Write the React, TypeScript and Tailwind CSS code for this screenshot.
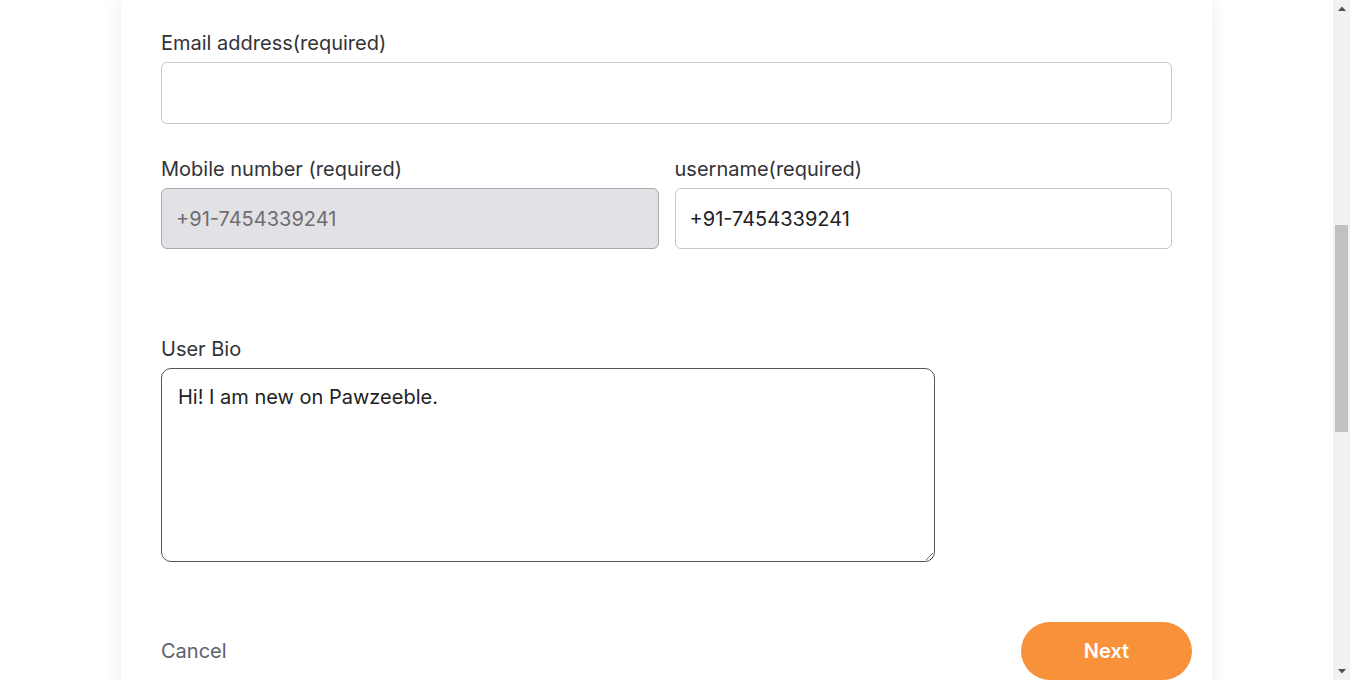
import React from "react";

function Label({ children }: { children: React.ReactNode }) {
  return (
    <label className="mb-[4px] text-[20px] leading-[30px] text-[#333338]">
      {children}
    </label>
  );
}

function ScrollBar() {
  return (
    <div className="flex h-[680px] w-[17px] shrink-0 flex-col bg-[#f1f1f1]">
      <div className="flex h-[17px] items-center justify-center">
        <svg width="8" height="5" viewBox="0 0 8 5">
          <path d="M0 5 L4 0.5 L8 5 Z" fill="#505050" />
        </svg>
      </div>
      <div className="flex flex-1 flex-col px-[2px]">
        <div className="h-[208px]" />
        <div className="h-[207px] w-full bg-[#c1c1c1]" />
      </div>
      <div className="flex h-[17px] items-center justify-center">
        <svg width="8" height="5" viewBox="0 0 8 5">
          <path d="M0 0 L4 4.5 L8 0 Z" fill="#505050" />
        </svg>
      </div>
    </div>
  );
}

export default function App() {
  return (
    <div
      className="flex h-[680px] w-full overflow-hidden bg-white"
      style={{ fontFamily: "Inter, 'Noto Sans', sans-serif" }}
    >
      <div className="flex-1 overflow-hidden">
        <div className="mx-auto h-[760px] w-[1091px] bg-white px-10 pt-[28px] shadow-[0_0_18px_rgba(0,0,0,0.08)]">
          <div className="flex flex-col">
            <Label>Email address(required)</Label>
            <input
              type="text"
              className="h-[62px] w-full rounded-[6px] border border-[#c8c8cc] bg-white px-[14px] text-[20px] outline-none"
            />
          </div>
          <div className="mt-[30px] grid grid-cols-2 gap-4">
            <div className="flex flex-col">
              <Label>Mobile number (required)</Label>
              <input
                type="text"
                disabled
                placeholder="+91-7454339241"
                className="h-[61px] w-full rounded-[6px] border border-[#a8a8ae] bg-[#e2e1e6] px-[14px] text-[20px] text-[#6d6d72] placeholder:text-[#6d6d72] outline-none"
              />
            </div>
            <div className="flex flex-col">
              <Label>username(required)</Label>
              <input
                type="text"
                defaultValue="+91-7454339241"
                className="h-[61px] w-full rounded-[6px] border border-[#c8c8cc] bg-white px-[14px] text-[20px] text-[#222226] outline-none"
              />
            </div>
          </div>
          <div className="mt-[85px] flex flex-col">
            <Label>User Bio</Label>
            <textarea
              defaultValue="Hi! I am new on Pawzeeble."
              className="h-[194px] w-[774px] rounded-[10px] border border-[#55555f] bg-white px-4 py-[13px] text-[20px] leading-[30px] text-[#222226] outline-none"
            />
          </div>
          <div className="-mr-5 mt-[60px] flex items-center justify-between">
            <button className="text-[20px] text-[#60606e]">Cancel</button>
            <button className="h-[58px] w-[171px] rounded-full bg-[#f7923b] text-[20px] font-semibold text-white">
              Next
            </button>
          </div>
        </div>
      </div>
      <ScrollBar />
    </div>
  );
}
